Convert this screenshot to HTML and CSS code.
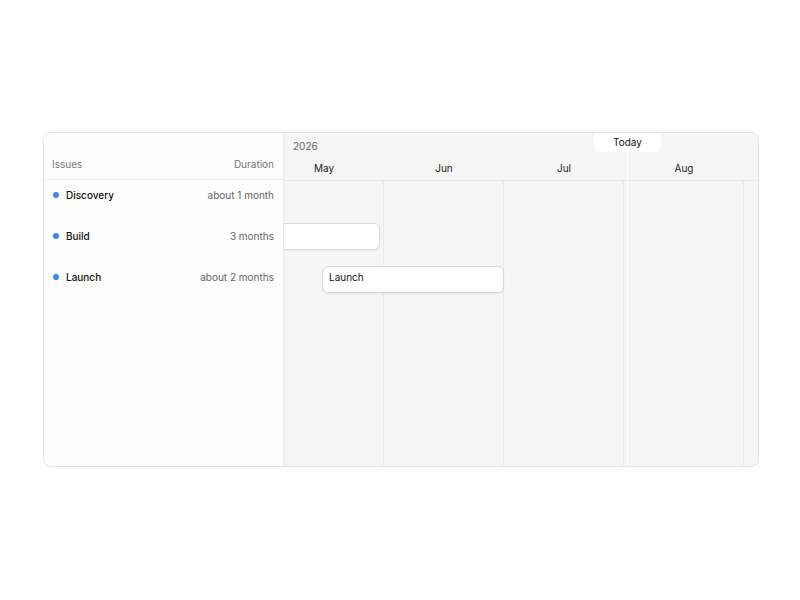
FILE: index.html
```html
<!DOCTYPE html>
<html>
<head>
<meta charset="utf-8">
<link rel="stylesheet" href="styles.css">
</head>
<body>
<div class="gantt">
  <div class="list">
    <div class="list-head"><span>Issues</span><span>Duration</span></div>
    <div class="list-row"><span class="name"><i class="dot"></i>Discovery</span><span class="dur">about 1 month</span></div>
    <div class="list-row"><span class="name"><i class="dot"></i>Build</span><span class="dur">3 months</span></div>
    <div class="list-row"><span class="name"><i class="dot"></i>Launch</span><span class="dur">about 2 months</span></div>
  </div>
  <div class="timeline">
    <div class="track">
      <div class="year">2026</div>
      <div class="months">
        <div class="month">May</div>
        <div class="month">Jun</div>
        <div class="month">Jul</div>
        <div class="month">Aug</div>
      </div>
      <div class="body">
        <div class="tl-row"></div>
        <div class="tl-row"><div class="bar bar-build" style="margin-left:-245px;width:361px"></div></div>
        <div class="tl-row"><div class="bar bar-launch" style="margin-left:58px;width:182px">Launch</div></div>
      </div>
      <div class="today" style="left:363px">
        <div class="today-label">Today</div>
        <div class="today-line"></div>
      </div>
    </div>
  </div>
</div>
</body>
</html>
```

FILE: styles.css
```css
html, body {
  margin: 0;
  padding: 0;
  background: #ffffff;
}
body {
  height: 600px;
  padding: 132px 0 0 43px;
  box-sizing: border-box;
  font-family: Inter, "Liberation Sans", sans-serif;
  color: #111;
}
.gantt {
  width: 716px;
  height: 335px;
  box-sizing: border-box;
  border: 1px solid #e3e3e3;
  border-radius: 8px;
  display: flex;
  overflow: hidden;
  background: #f5f5f5;
}
.list {
  width: 240px;
  flex: none;
  box-sizing: border-box;
  background: #fdfdfd;
  border-right: 1px solid #ebebeb;
}
.list-head {
  height: 47px;
  box-sizing: border-box;
  border-bottom: 1px solid #ebebeb;
  display: flex;
  align-items: flex-start;
  justify-content: space-between;
  padding: 24px 9px 0 8px;
  font-size: 10px;
  line-height: 14px;
  color: #777;
}
.list-row {
  height: 41px;
  display: flex;
  justify-content: space-between;
  align-items: flex-start;
  padding: 8px 9px 0 8px;
  box-sizing: border-box;
  font-size: 10px;
  line-height: 14px;
}
.name {
  display: flex;
  align-items: center;
  gap: 7px;
  font-weight: 500;
  color: #111;
}
.dot {
  width: 6px;
  height: 6px;
  border-radius: 50%;
  background: #3b82f6;
  display: block;
  margin-left: 1px;
}
.dur {
  color: #666;
}
.timeline {
  flex: 1;
  overflow: hidden;
}
.track {
  position: relative;
  margin-left: -20px;
  width: 600px;
}
.year {
  height: 24px;
  padding: 6px 0 0 29px;
  box-sizing: border-box;
  font-size: 10px;
  line-height: 14px;
  color: #666;
}
.months {
  display: flex;
  height: 23px;
  border-bottom: 1px solid #ebebeb;
}
.month {
  width: 120px;
  flex: none;
  text-align: center;
  font-size: 10px;
  line-height: 14px;
  padding-top: 4px;
  box-sizing: border-box;
  color: #222;
}
.body {
  height: 300px;
  background-image: linear-gradient(to right, transparent 119px, #e9e9e9 119px, #e9e9e9 120px);
  background-size: 120px 100%;
}
.tl-row {
  height: 41px;
  display: flex;
  align-items: flex-start;
}
.bar {
  flex: none;
  height: 27px;
  margin-top: 1px;
  box-sizing: border-box;
  background: #fff;
  border: 1px solid #dadada;
  border-radius: 6px;
  box-shadow: 0 1px 2px rgba(0, 0, 0, 0.06);
  font-size: 10px;
  line-height: 21px;
  padding-left: 6px;
  color: #111;
}
.bar-launch {
  margin-top: 3px;
}
.today {
  position: absolute;
  top: 0;
  height: 334px;
  width: 0;
}
.today-label {
  position: absolute;
  top: 0;
  left: -33px;
  width: 67px;
  height: 19px;
  background: #fff;
  border-radius: 0 0 6px 6px;
  font-size: 10px;
  line-height: 19px;
  text-align: center;
  color: #111;
}
.today-line {
  position: absolute;
  top: 19px;
  bottom: 0;
  left: 0;
  width: 1px;
  background: #fff;
}
```
